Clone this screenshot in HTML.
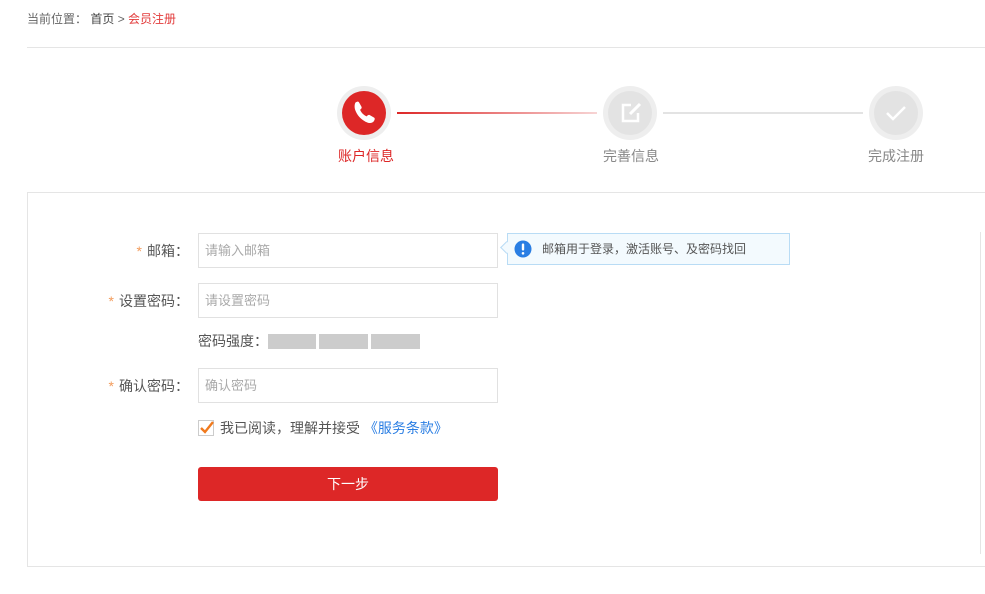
<!DOCTYPE html>
<html><head><meta charset="utf-8"><style>
*{margin:0;padding:0;box-sizing:border-box}
body{width:985px;height:594px;background:#fff;font-family:"Liberation Sans","Noto Sans CJK SC",sans-serif;font-size:13px;color:#666;position:relative;overflow:hidden}
.a{position:absolute}
.crumb{left:27px;top:10px;color:#666;font-size:12px}
.crumb .c{color:#e23a3a}
.hr{left:27px;top:47px;width:958px;height:1px;background:#e5e5e5}
.circ{width:54px;height:54px;border-radius:50%;background:#eee;}
.circ div{position:absolute;left:5px;top:5px;width:44px;height:44px;border-radius:50%;background:#e3e3e3}
.lbl{font-size:14px;color:#888;width:100px;text-align:center}
.box{left:27px;top:192px;width:970px;height:375px;border:1px solid #e5e5e5;border-right:none}
.inp{left:198px;width:300px;height:35px;border:1px solid #e1e1e1;color:#aaa;padding-left:6px;line-height:33px;font-size:13px}
.fl{width:162px;text-align:right;left:27px;color:#555;font-size:14px}
.fl b{color:#f29b5b;font-weight:normal;margin-right:5px}
.bar{top:334px;height:15px;width:48px;background:#ccc}
</style></head><body>
<div class="a crumb">当前位置： <span style="color:#444">首页</span> &gt; <span class="c">会员注册</span></div>
<div class="a hr"></div>

<div class="a circ" style="left:337px;top:86px"><div style="background:#dd2727">
<svg width="44" height="44" viewBox="0 0 44 44"><path d="M13.5 11.5c1.8-1.2 3-1.2 3.6 0l2.4 4.2c.6 1.2-.2 2.2-1.4 3c1.2 3 3.6 5.4 6.6 6.7c1-1.2 1.9-1.9 3.1-1.3l4.1 2.4c1.2.7 1.1 1.8 0 3.6c-1.8 2.4-4.8 2.4-8.4.6c-4.8-2.4-8.4-6.6-10.2-11.4c-1.2-3.6-.6-6.4.2-7.8z" fill="#fff"/></svg></div></div>
<div class="a" style="left:397px;top:112px;width:200px;height:2px;background:linear-gradient(to right,#dd2727,#f7d4d4)"></div>
<div class="a circ" style="left:603px;top:86px"><div>
<svg width="44" height="44" viewBox="0 0 44 44" fill="none" stroke="#fff" stroke-width="2.5"><path d="M23 14h-8v16h15v-8"/><path d="M32 13l-10 10" stroke-width="3"/></svg></div></div>
<div class="a" style="left:663px;top:112px;width:200px;height:2px;background:#e3e3e3"></div>
<div class="a circ" style="left:869px;top:86px"><div>
<svg width="44" height="44" viewBox="0 0 44 44" fill="none" stroke="#fff" stroke-width="2.5"><path d="M13 22l6 6l12-12"/></svg></div></div>
<div class="a lbl" style="left:316px;top:146px;color:#dd2727">账户信息</div>
<div class="a lbl" style="left:581px;top:146px">完善信息</div>
<div class="a lbl" style="left:846px;top:146px">完成注册</div>

<div class="a box"></div>
<div class="a" style="left:980px;top:232px;width:1px;height:322px;background:#e5e5e5"></div>

<div class="a fl" style="top:241px"><b>*</b>邮箱：</div>
<div class="a inp" style="top:233px">请输入邮箱</div>
<div class="a" style="left:507px;top:233px;width:283px;height:32px;background:#f3fafe;border:1px solid #b9dcf5;font-size:12px;color:#555;line-height:30px;padding-left:34px">邮箱用于登录，激活账号、及密码找回
<svg class="a" style="left:6px;top:6px" width="18" height="18" viewBox="0 0 18 18"><circle cx="9" cy="9" r="8.5" fill="#2a7ee3"/><rect x="7.8" y="3.5" width="2.4" height="7" rx="1" fill="#fff"/><circle cx="9" cy="13.3" r="1.3" fill="#fff"/></svg></div>
<div class="a" style="left:502px;top:243px;width:9px;height:9px;background:#f3fafe;border-left:1px solid #b9dcf5;border-bottom:1px solid #b9dcf5;transform:rotate(45deg)"></div>

<div class="a fl" style="top:291px"><b>*</b>设置密码：</div>
<div class="a inp" style="top:283px">请设置密码</div>
<div class="a" style="left:198px;top:331px;color:#555;font-size:14px">密码强度：</div>
<div class="a bar" style="left:268px"></div>
<div class="a bar" style="left:319px;width:49px"></div>
<div class="a bar" style="left:371px;width:49px"></div>

<div class="a fl" style="top:376px"><b>*</b>确认密码：</div>
<div class="a inp" style="top:368px">确认密码</div>

<div class="a" style="left:198px;top:420px;width:16px;height:16px;border:1px solid #ccc">
<svg class="a" style="left:0;top:-1px" width="16" height="16" viewBox="0 0 16 16" fill="none" stroke="#f07a1e" stroke-width="2.4"><path d="M2 8l4 4l8-10"/></svg></div>
<div class="a" style="left:220px;top:418px;color:#555;font-size:14px">我已阅读，理解并接受 <span style="color:#2a7ee3">《服务条款》</span></div>

<div class="a" style="left:198px;top:467px;width:300px;height:34px;background:#dd2727;border-radius:3px;color:#fff;text-align:center;line-height:34px;font-size:14px">下一步</div>
</body></html>
